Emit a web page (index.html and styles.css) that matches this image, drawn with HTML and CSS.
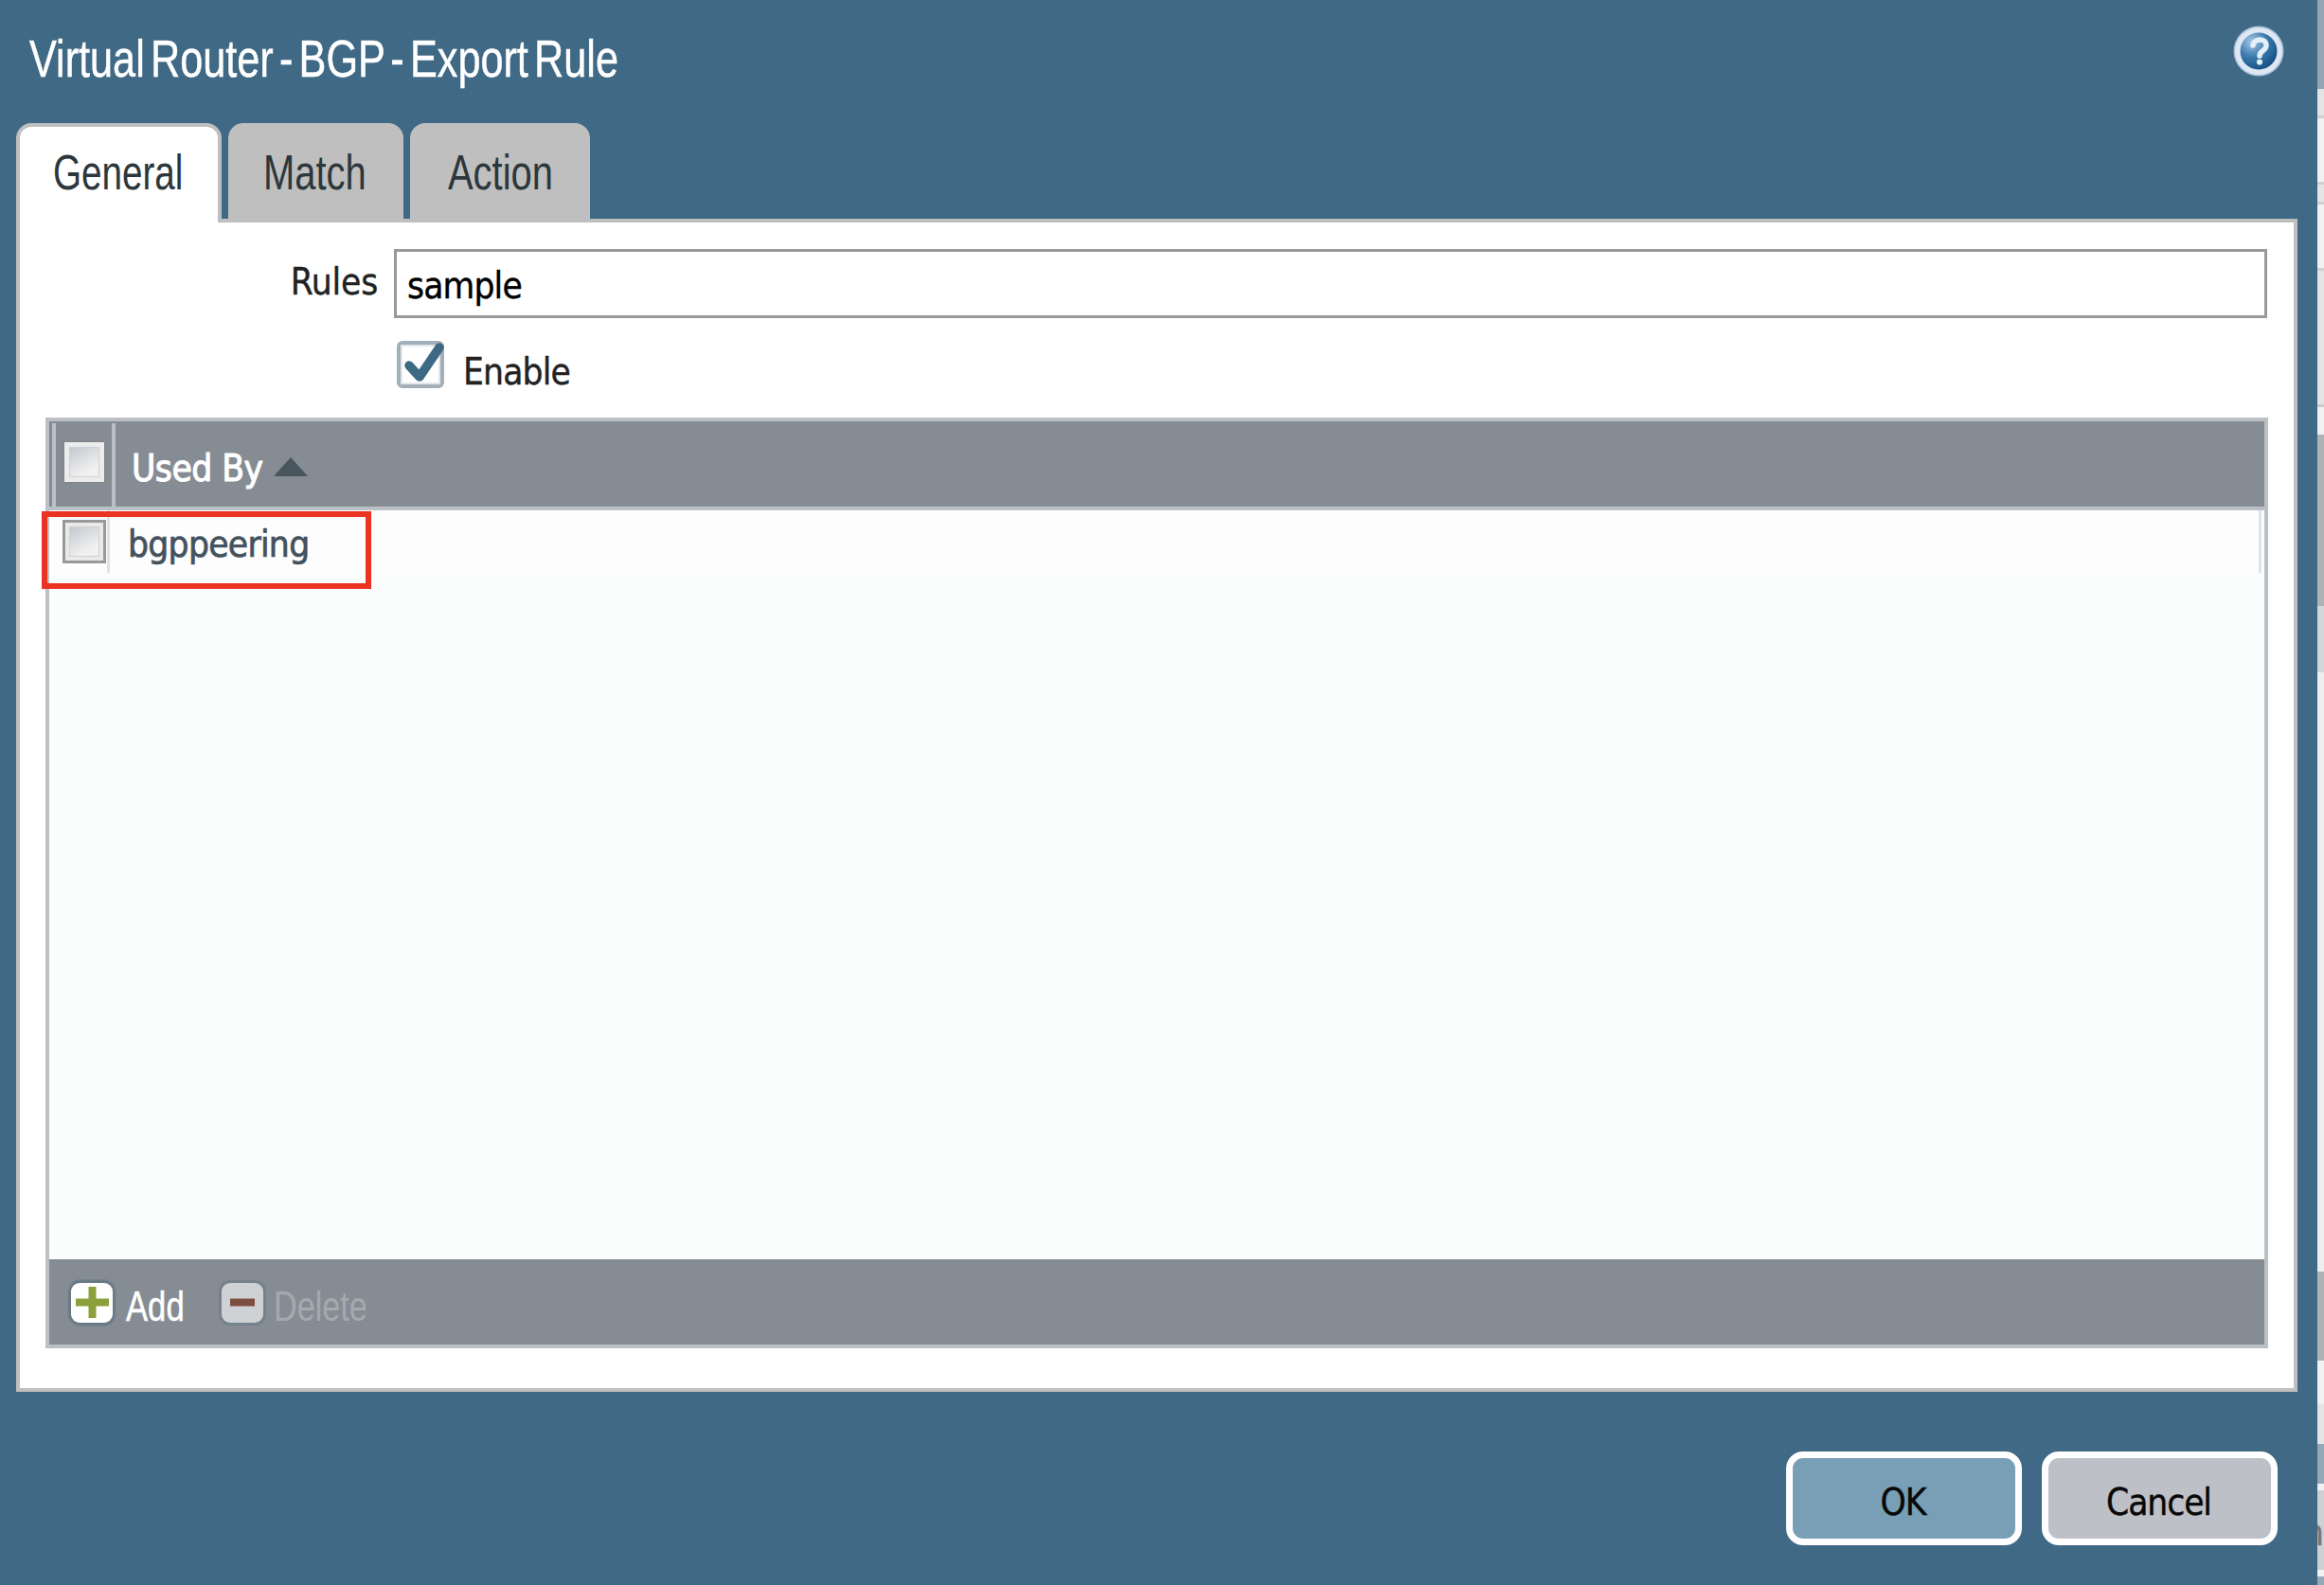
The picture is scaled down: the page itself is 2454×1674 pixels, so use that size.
FILE: index.html
```html
<!DOCTYPE html>
<html lang="en">
<head>
<meta charset="utf-8">
<title>Virtual Router - BGP - Export Rule</title>
<link rel="stylesheet" href="styles.css">
</head>
<body>
<div class="screen">
  <main class="dialog">
    <header class="titlebar">
      <h1 class="title narrow">Virtual Router - BGP - Export Rule</h1>
      <svg class="help" viewBox="0 0 54 54">
        <defs>
          <radialGradient id="orb" cx="0.32" cy="0.25" r="0.85">
            <stop offset="0" stop-color="#a9cbe9"/>
            <stop offset="0.45" stop-color="#3f7db0"/>
            <stop offset="1" stop-color="#0f4a80"/>
          </radialGradient>
        </defs>
        <circle cx="27" cy="27" r="26.5" fill="#a9bfdc"/>
        <circle cx="27" cy="27" r="25" fill="#dfe7f3"/>
        <circle cx="27" cy="27" r="19.5" fill="url(#orb)"/>
        <path d="M21 21c1-8 14-8 14 0 0 6-7 5-7 11" fill="none" stroke="#e4f0f8" stroke-width="5.500" stroke-linecap="round"/>
        <circle cx="28" cy="38.500" r="3.100" fill="#e4f0f8"/>
      </svg>
    </header>
    <nav class="tabs">
      <div class="tab active"><span class="narrow">General</span></div>
      <div class="tab match"><span class="narrow">Match</span></div>
      <div class="tab action"><span class="narrow">Action</span></div>
    </nav>
    <section class="panel">
      <div class="field">
        <label class="label">Rules</label>
        <div class="input">sample</div>
      </div>
      <div class="enable">
        <svg class="tick" viewBox="0 0 50 50">
          <rect x="2" y="2" width="46" height="46" rx="4" fill="#fff" stroke="#a3afb8" stroke-width="4"/>
          <rect x="5" y="5" width="40" height="40" fill="none" stroke="#e3e7ea" stroke-width="2"/>
          <path d="M13 26l11 12L45 7" fill="none" stroke="#3e6985" stroke-width="9.500" stroke-linejoin="round" stroke-linecap="round"/>
        </svg>
        <span>Enable</span>
      </div>
      <div class="grid">
        <div class="grid-head">
          <div class="cell-check"><i class="box"></i></div>
          <span class="col-name">Used By</span>
          <svg class="sort" viewBox="0 0 36 20"><path d="M18 0l18 20H0z" fill="#48545e"/></svg>
        </div>
        <div class="grid-body">
          <div class="row">
            <div class="row-check"><i class="box framed"></i></div>
            <span class="row-name">bgppeering</span>
          </div>
          <div class="highlight"></div>
        </div>
        <div class="toolbar">
          <svg class="tool-icon" viewBox="0 0 54 54">
            <rect x="1.500" y="2" width="51" height="50" rx="13" fill="#74828c"/>
            <rect x="3" y="3.500" width="48" height="47" rx="12" fill="#687985"/>
            <rect x="5" y="6" width="44" height="42" rx="9" fill="#fff"/>
            <path d="M10 26.500h35M27.500 10v33" stroke="#8ba03a" stroke-width="8"/>
          </svg>
          <span class="narrow add">Add</span>
          <svg class="tool-icon second" viewBox="0 0 54 54">
            <rect x="2" y="3" width="50" height="48" rx="12" fill="#76828b"/>
            <rect x="5" y="6" width="44" height="42" rx="9" fill="#ced2d5"/>
            <path d="M14 26.500h26" stroke="#7f4d40" stroke-width="8"/>
          </svg>
          <span class="narrow delete">Delete</span>
        </div>
      </div>
    </section>
    <footer class="actions">
      <div class="button ok">OK</div>
      <div class="button cancel">Cancel</div>
    </footer>
  </main>
  <aside class="behind">
    <i class="b1"></i><i class="b2"></i><i class="b3"></i><i class="b4"></i><i class="b5"></i><i class="b6"></i><i class="b7"></i><i class="b8"></i><i class="b9"></i><i class="b10"></i><i class="b11"></i><i class="b12"></i><i class="b13"></i><i class="b14">n</i><i class="b15"></i><i class="b16"></i>
  </aside>
</div>
</body>
</html>
```
FILE: styles.css
```css
* { box-sizing: border-box; }
body {
  margin: 0;
  font-family: "DejaVu Sans Condensed", "DejaVu Sans", sans-serif;
  font-stretch: condensed;
  font-size: 38.5px;
  line-height: 46px;
  letter-spacing: -0.85px;
  color: #222;
  -webkit-text-stroke-width: 0.4px;
}
.screen { display: flex; width: 2454px; height: 1674px; overflow: hidden; background: #eee; }
.dialog { width: 2447px; height: 1674px; background: #3f6985; padding: 0 21px 0 17px; display: flex; flex-direction: column; }
.narrow {
  display: inline-block;
  font-family: "Liberation Sans", sans-serif;
  font-stretch: normal;
  letter-spacing: 0;
  white-space: nowrap;
  transform-origin: 0 50%;
  -webkit-text-stroke-width: 0;
}
.titlebar { height: 130px; display: flex; justify-content: space-between; align-items: flex-start; padding: 27px 14px 0 14px; }
.title { margin: 3px 0 0; font-size: 56px; line-height: 64px; font-weight: 400; color: #fff; word-spacing: -7.5px; transform: scaleX(0.772); -webkit-text-stroke-width: 0.5px; }
.help { width: 54px; height: 54px; }
.tabs { display: flex; height: 101px; gap: 7px; }
.tab { height: 101px; border-radius: 16px 16px 0 0; background: #bfbfbf; color: #2c373b; padding: 22px 0 0 39px; font-size: 51.5px; line-height: 60px; }
.tab .narrow { transform: scaleX(0.775); }
.tab.active { width: 217px; height: 105px; background: #fff; border: 4px solid #bfbfbf; border-bottom: 0; padding: 18px 0 0 35px; z-index: 1; }
.tab.active .narrow { transform: scaleX(0.75); }
.tab.match { width: 185px; padding-left: 37px; }
.tab.action { width: 190px; padding-left: 40px; }
.panel { height: 1239px; background: #fff; border: 4px solid #bfbfbf; padding: 28px 28px 0 27px; }
.field { display: flex; justify-content: flex-end; gap: 17px; height: 73px; }
.label { padding-top: 12px; letter-spacing: -0.2px; }
.input { width: 1978px; height: 73px; border: 3px solid #999; color: #000; padding: 13px 11px; }
.enable { display: flex; gap: 20px; margin: 23px 0 0 371px; height: 84px; }
.tick { width: 50px; height: 50px; margin-top: 1px; }
.enable span { padding-top: 11px; }
.grid { width: 2347px; height: 983px; border: 4px solid #bbc0c6; margin-top: -2px; display: flex; flex-direction: column; }
.grid-head { height: 94px; border-bottom: 4px solid #bbc0c6; background: #868c93; display: flex; color: #fff; }
.cell-check { width: 67px; height: 88px; margin: 2px 0 0 3px; border: solid #bbc0c6; border-width: 0 4px; padding: 20px 0 0 9px; }
.box { display: block; width: 42px; height: 42px; border: 5px solid #ececec; background: linear-gradient(150deg, #c2c7ce, #f1f1f1 75%); box-shadow: inset 0 0 0 1px #cfd1d4, 0 0 2px #77736e; }
.col-name { padding: 27px 12px 0 17px; letter-spacing: -0.5px; -webkit-text-stroke: 1px #fff; }
.sort { width: 36px; height: 20px; margin-top: 38px; }
.grid-body { flex: 1; background: #fbfcfc; position: relative; }
.row { height: 66px; width: 2336px; background: #fdfdfd; border-right: 3px solid #e0e3e6; display: flex; }
.row-check { width: 64px; border-right: 3px solid #e0e3e6; padding: 10px 0 0 14px; }
.box.framed { width: 46px; height: 46px; border-color: #e9e9e9; outline: 3px solid #999; outline-offset: -3px; border-width: 7px; box-shadow: inset 0 0 0 1px #cfd1d4; }
.row-name { padding: 13px 0 0 19px; letter-spacing: -0.7px; color: #44525d; -webkit-text-stroke: 0.7px #44525d; }
.highlight { position: absolute; left: -8px; top: 1px; width: 348px; height: 82px; border: 6px solid #ea3323; }
.toolbar { height: 90px; background: #868c93; display: flex; padding: 19px 0 0 18px; font-size: 45px; line-height: 52px; }
.tool-icon { width: 54px; height: 54px; flex: none; }
.add { width: 80px; margin: 5px 0 0 9px; color: #fff; transform: scaleX(0.77); -webkit-text-stroke-width: 0.5px; }
.second { margin-left: 16px; }
.delete { margin: 5px 0 0 6px; color: #a5a9ae; transform: scaleX(0.76); }
.actions { display: flex; justify-content: flex-end; gap: 21px; padding: 63px 21px 0 0; }
.button { width: 249px; height: 99px; border: 7px solid #fff; border-radius: 18px; background: #789fb5; color: #080808; text-align: center; padding: 24px 2px 0 0; letter-spacing: -1.1px; }
.cancel { background: #bdc0c6; }
.behind { width: 7px; display: flex; flex-direction: column; overflow: hidden; }
.behind i { flex: none; font-style: normal; background: #eee; }
.behind .b1 { height: 94px; background: #94a6b3; }
.behind .b2 { height: 31px; background: #e4e4e4; border-bottom: 3px solid #d0d0d0; }
.behind .b3 { height: 70px; background: #f1f1f1; border-bottom: 3px solid #d0d0d0; }
.behind .b4 { height: 21px; background: #e4e4e4; border-bottom: 3px solid #d0d0d0; }
.behind .b5 { height: 70px; background: #f1f1f1; border-bottom: 3px solid #d0d0d0; }
.behind .b6 { height: 144px; background: #e4e4e4; border-bottom: 3px solid #ccc; }
.behind .b7 { height: 29px; background: #f1f1f1; }
.behind .b8 { height: 181px; background: #adb2b5; }
.behind .b9 { height: 70px; background: #d1d8da; }
.behind .b10 { height: 633px; background: #eee; }
.behind .b11 { height: 94px; background: #adb2b5; }
.behind .b12 { height: 88px; background: #e4e4e4; border-top: 46px solid #f1f1f1; }
.behind .b13 { height: 42px; background: #94a9b8; }
.behind .b14 { height: 91px; background: #cfd0d4; border-top: 7px solid #f1f1f1; color: #777; padding-top: 22px; text-indent: -15px; }
.behind .b15 { height: 7px; background: #f1f1f1; }
.behind .b16 { flex: 1; background: #94a9b8; }
```
